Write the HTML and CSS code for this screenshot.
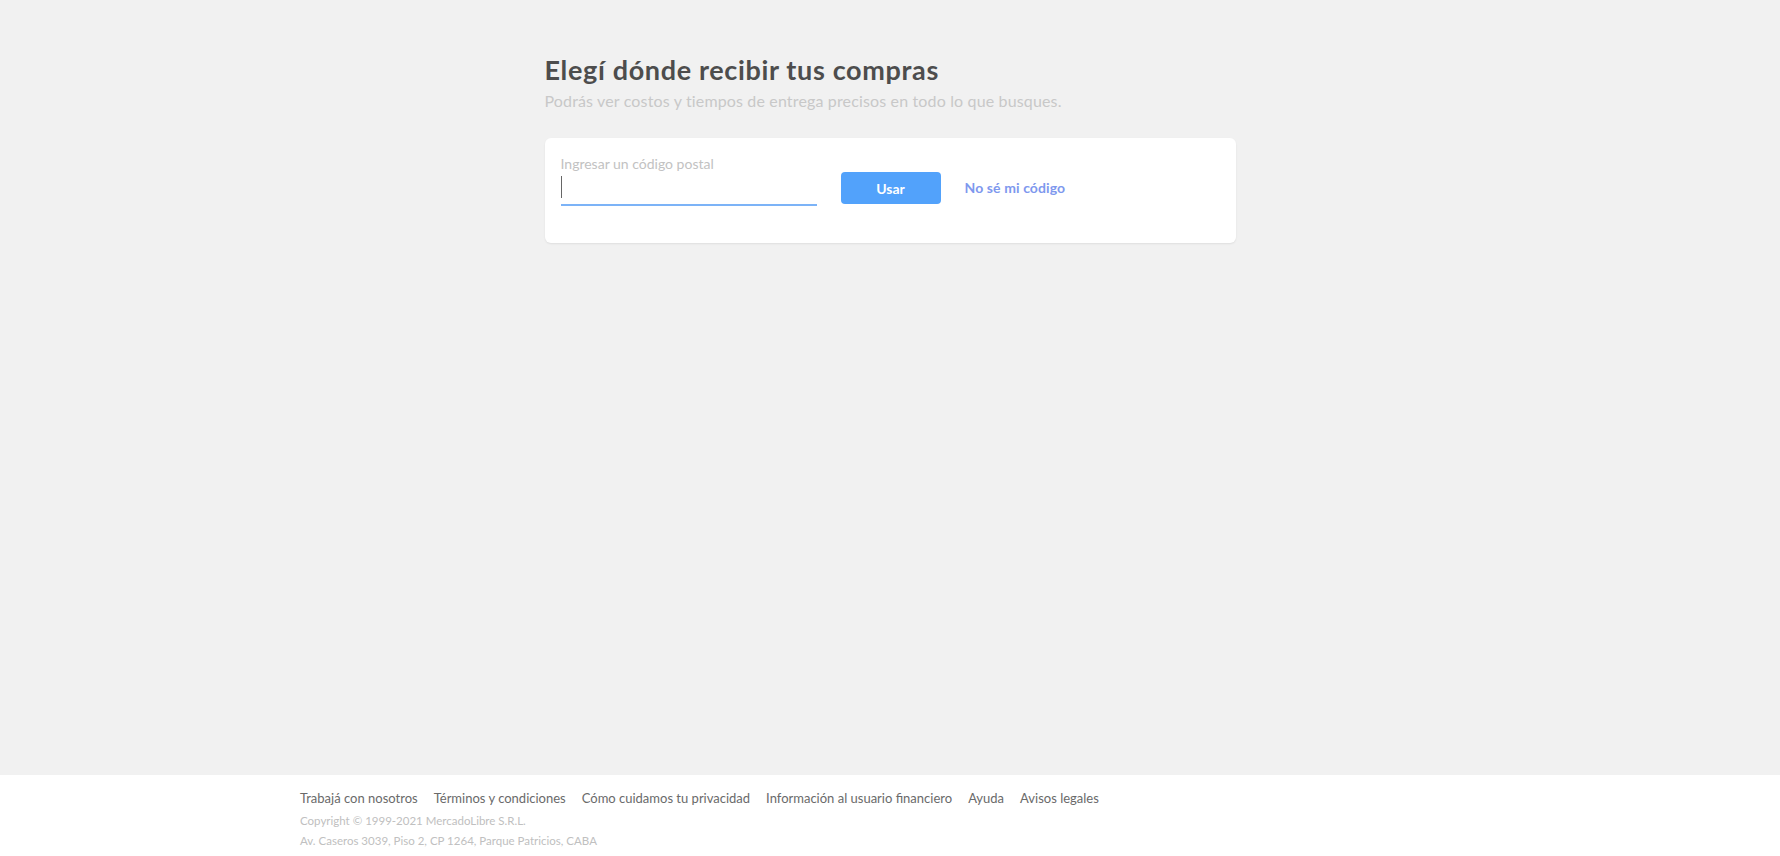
FILE: index.html
```html
<!DOCTYPE html>
<html lang="es">
<head>
<meta charset="utf-8">
<title>Elegí dónde recibir tus compras</title>
<link rel="stylesheet" href="styles.css">
</head>
<body>
<div class="page">
  <main class="main">
    <div class="container">
      <h1 class="title">Elegí dónde recibir tus compras</h1>
      <p class="subtitle">Podrás ver costos y tiempos de entrega precisos en todo lo que busques.</p>
      <div class="card">
        <div class="row">
          <div class="field">
            <label class="label" for="zip">Ingresar un código postal</label>
            <div class="input-wrap">
              <span class="caret"></span>
              <input id="zip" class="input" type="text">
            </div>
          </div>
          <button class="btn" type="button">Usar</button>
          <a class="link" href="#">No sé mi código</a>
        </div>
      </div>
    </div>
  </main>
  <footer class="footer">
    <div class="footer-inner">
      <nav class="footer-links">
        <a href="#">Trabajá con nosotros</a>
        <a href="#">Términos y condiciones</a>
        <a href="#">Cómo cuidamos tu privacidad</a>
        <a href="#">Información al usuario financiero</a>
        <a href="#">Ayuda</a>
        <a href="#">Avisos legales</a>
      </nav>
      <p class="copy">Copyright © 1999-2021 MercadoLibre S.R.L.</p>
      <p class="copy">Av. Caseros 3039, Piso 2, CP 1264, Parque Patricios, CABA</p>
    </div>
  </footer>
</div>
</body>
</html>
```
FILE: styles.css
```css
html, body {
  margin: 0;
  padding: 0;
  height: 100%;
}
body {
  background: #f1f1f1;
  font-family: Lato, "Open Sans", "Liberation Sans", sans-serif;
  color: #333;
}
.page {
  display: flex;
  flex-direction: column;
  min-height: 100vh;
}
.main {
  flex: 1;
}
.container {
  width: 691px;
  margin: 0 auto;
  padding-top: 53px;
}
.title {
  margin: 0;
  font-size: 27px;
  line-height: 34px;
  font-weight: 700;
  color: #4d4d4d;
  letter-spacing: 0.65px;
}
.subtitle {
  margin: 4px 0 0;
  font-size: 16px;
  line-height: 20px;
  letter-spacing: 0.15px;
  color: #c8c8c8;
}
.card {
  margin-top: 27px;
  background: #fff;
  border-radius: 6px;
  box-shadow: 0 1px 2px rgba(0,0,0,0.08);
  padding: 18px 16px 37px;
}
.row {
  display: flex;
  align-items: flex-end;
}
.field {
  display: flex;
  flex-direction: column;
  width: 256px;
}
.label {
  font-size: 14px;
  line-height: 16px;
  color: #c2c2c2;
}
.input-wrap {
  position: relative;
  margin-top: 2px;
  border-bottom: 2px solid #7cb3f7;
  height: 30px;
}
.input {
  border: 0;
  outline: none;
  background: transparent;
  width: 100%;
  height: 100%;
  padding: 0;
  font-family: inherit;
  font-size: 15px;
}
.caret {
  position: absolute;
  left: 0;
  top: 2px;
  width: 1px;
  height: 22px;
  background: #666;
}
.btn {
  margin-left: 24px;
  margin-bottom: 2px;
  width: 100px;
  height: 32px;
  border: 0;
  border-radius: 4px;
  background: #52a2fb;
  color: #fff;
  font-family: inherit;
  font-size: 14px;
  font-weight: 700;
}
.link {
  margin-left: 24px;
  margin-bottom: 10px;
  font-size: 14px;
  line-height: 16px;
  font-weight: 700;
  letter-spacing: 0.1px;
  color: #7e98ee;
  text-decoration: none;
}
.footer {
  background: #fff;
  height: 81px;
}
.footer-inner {
  max-width: 1180px;
  margin: 0 auto;
  padding: 15px 10px 0;
}
.footer-links {
  display: flex;
  gap: 16px;
}
.footer-links a {
  font-size: 13px;
  line-height: 16px;
  color: #6a6a6a;
  text-decoration: none;
}
.copy {
  margin: 0;
  font-size: 11.5px;
  line-height: 20px;
  color: #c0c0c0;
}
.footer-links + .copy {
  margin-top: 5px;
}
```
